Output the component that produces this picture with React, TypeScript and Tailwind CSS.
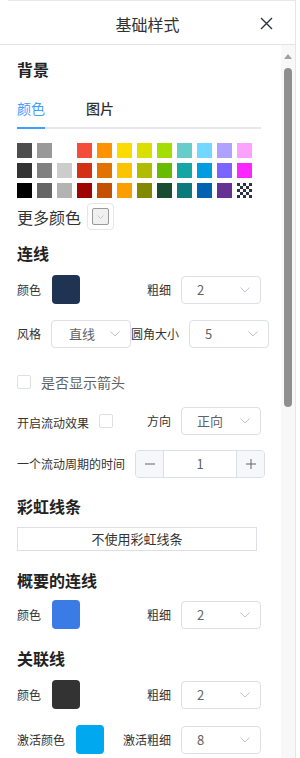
import React from 'react'

const FONT = '"Noto Sans CJK SC", "Noto Sans", sans-serif'

const SWATCHES = [
  ['#4d4d4d', '#999999', '#ffffff', '#f44e3b', '#fe9200', '#fcdc00', '#dbdf00', '#a4dd00', '#68ccca', '#73d8ff', '#aea1ff', '#fda1ff'],
  ['#333333', '#808080', '#cccccc', '#d33115', '#e27300', '#fcc400', '#b0bc00', '#68bc00', '#16a5a5', '#009ce0', '#7b64ff', '#fa28ff'],
  ['#000000', '#666666', '#b3b3b3', '#9f0500', '#c45100', '#fb9e00', '#808900', '#194d33', '#0c797d', '#0062b1', '#653294', 'transparent'],
]

function Chevron({ className = '' }: { className?: string }) {
  return (
    <svg width="10" height="6" viewBox="0 0 10 6" className={className}>
      <path d="M0.5 0.5 L5 5 L9.5 0.5" fill="none" stroke="#c0c4cc" strokeWidth="1" />
    </svg>
  )
}

function Select({ value }: { value: string }) {
  return (
    <div className="w-[80px] h-[28px] border border-[#dcdfe6] rounded-[4px] flex items-center pl-[15px] pr-[10px] text-[13px] text-[#606266] bg-white shrink-0">
      <span className="flex-1">{value}</span>
      <Chevron />
    </div>
  )
}

function Heading({ children, className = '' }: { children: React.ReactNode; className?: string }) {
  return <div className={`h-[24px] leading-[24px] text-[16px] font-bold text-[#222] ${className}`}>{children}</div>
}

function Checker() {
  return (
    <div className="w-[15px] h-[15px] grid grid-cols-5 grid-rows-5">
      {Array.from({ length: 25 }).map((_, i) => (
        <div key={i} className={(Math.floor(i / 5) + (i % 5)) % 2 === 0 ? 'bg-[#2b3345]' : 'bg-white'} />
      ))}
    </div>
  )
}

function ColorRow({ color, label = '颜色', rightLabel = '粗细', value = '2', className = '' }: {
  color: string; label?: string; rightLabel?: string; value?: string; className?: string
}) {
  return (
    <div className={`flex items-center h-[29px] ${className}`}>
      <span className="text-[12px] text-[#333]">{label}</span>
      <div className="ml-[11px] w-[28px] h-[29px] rounded-[4px]" style={{ background: color }} />
      <div className="flex-1" />
      <span className="text-[12px] text-[#333]">{rightLabel}</span>
      <div className="ml-[10px]"><Select value={value} /></div>
    </div>
  )
}

export default function App() {
  return (
    <div className="w-[300px] h-[758px] bg-white overflow-hidden" style={{ fontFamily: FONT }}>
      <div className="w-[296px] h-full flex flex-col border-r border-[#e6e6e6]">
        <div className="h-[1px] ml-[8px] bg-[#e8e8e8] shrink-0" />
        {/* header */}
        <div className="h-[44px] shrink-0 border-b border-[#e4e4e4] flex items-center justify-center relative">
          <span className="text-[16px] text-[#303133] mt-[2px]">基础样式</span>
          <svg width="13" height="13" viewBox="0 0 13 13" className="absolute left-[260px] top-[16px]">
            <path d="M1 1 L12 12 M12 1 L1 12" stroke="#2c3440" strokeWidth="1.4" />
          </svg>
        </div>

        <div className="flex-1 flex overflow-hidden">
          {/* content */}
          <div className="w-[281px] pl-[17px] pr-[20px] overflow-hidden">
            <Heading className="mt-[12px]">背景</Heading>

            {/* tabs */}
            <div className="mt-[8px] h-[40px] flex items-center relative border-b-2 border-[#e4e7ed]">
              <span className="text-[14px] text-[#409eff] pr-[20px]">颜色</span>
              <span className="text-[14px] text-[#303133] font-medium pl-[21px]">图片</span>
              <div className="absolute left-0 bottom-[-2px] w-[28px] h-[2px] bg-[#409eff]" />
            </div>

            {/* swatches */}
            <div className="mt-[14px] flex flex-col gap-[5px]">
              {SWATCHES.map((row, r) => (
                <div key={r} className="flex gap-[5px]">
                  {row.map((c, i) =>
                    c === 'transparent' ? (
                      <Checker key={i} />
                    ) : (
                      <div key={i} className="w-[15px] h-[15px]" style={{ background: c }} />
                    )
                  )}
                </div>
              ))}
            </div>

            <div className="mt-[5px] h-[27px] flex items-center">
              <span className="text-[16px] text-[#333]">更多颜色</span>
              <div className="ml-[6px] w-[27px] h-[27px] border border-[#e6e6e6] rounded-[4px] p-[4px]">
                <div className="w-full h-full border border-[#999] rounded-[2px] bg-[#f0f0f0] flex items-center justify-center">
                  <svg width="7" height="4" viewBox="0 0 7 4">
                    <path d="M0.5 0.5 L3.5 3.5 L6.5 0.5" fill="none" stroke="#c8c8c8" strokeWidth="1" />
                  </svg>
                </div>
              </div>
            </div>

            <Heading className="mt-[11px]">连线</Heading>
            <ColorRow color="#1f3352" className="mt-[10px]" />

            <div className="mt-[16px] h-[28px] flex items-center whitespace-nowrap">
              <span className="text-[12px] text-[#333]">风格</span>
              <div className="ml-[10px] w-[80px] h-[28px] border border-[#dcdfe6] rounded-[4px] flex items-center pl-[17px] pr-[10px] text-[13px] text-[#606266] shrink-0">
                <span className="flex-1">直线</span>
                <Chevron />
              </div>
              <span className="text-[12px] text-[#333]">圆角大小</span>
              <div className="ml-[10px]"><Select value="5" /></div>
            </div>

            <div className="mt-[24px] h-[20px] flex items-center">
              <div className="w-[14px] h-[14px] border border-[#dcdfe6] rounded-[2px] bg-white" />
              <span className="ml-[10px] text-[14px] text-[#606266]">是否显示箭头</span>
            </div>

            <div className="mt-[15px] h-[28px] flex items-center">
              <span className="text-[12px] text-[#333] mt-[3px]">开启流动效果</span>
              <div className="ml-[10px] w-[14px] h-[14px] border border-[#dcdfe6] rounded-[2px] bg-white" />
              <div className="flex-1" />
              <span className="text-[12px] text-[#333]">方向</span>
              <div className="ml-[10px]"><Select value="正向" /></div>
            </div>

            <div className="mt-[15px] h-[28px] flex items-center whitespace-nowrap">
              <span className="text-[12px] text-[#333]">一个流动周期的时间</span>
              <div className="ml-[10px] w-[130px] h-[28px] border border-[#dcdfe6] rounded-[4px] flex shrink-0 overflow-hidden">
                <div className="w-[28px] bg-[#f5f7fa] border-r border-[#dcdfe6] flex items-center justify-center text-[#606266] text-[16px]">
                  <svg width="10" height="2" viewBox="0 0 10 2"><path d="M0 1 H10" stroke="#606266" strokeWidth="1" /></svg>
                </div>
                <div className="flex-1 flex items-center justify-center text-[13px] text-[#606266]">1</div>
                <div className="w-[28px] bg-[#f5f7fa] border-l border-[#dcdfe6] flex items-center justify-center">
                  <svg width="10" height="10" viewBox="0 0 10 10"><path d="M0 5 H10 M5 0 V10" stroke="#606266" strokeWidth="1" /></svg>
                </div>
              </div>
            </div>

            <Heading className="mt-[16px]">彩虹线条</Heading>
            <div className="mt-[9px] w-[240px] h-[24px] border border-[#dcdfe6] flex items-center justify-center text-[13px] text-[#333]">
              不使用彩虹线条
            </div>

            <Heading className="mt-[17px]">概要的连线</Heading>
            <ColorRow color="#3a7be6" className="mt-[8px]" />

            <Heading className="mt-[17px]">关联线</Heading>
            <ColorRow color="#333333" className="mt-[10px]" />
            <ColorRow color="#00a8f0" label="激活颜色" rightLabel="激活粗细" value="8" className="mt-[16px]" />
          </div>

          {/* scrollbar */}
          <div className="w-[14px] bg-[#f8f8f8] flex flex-col items-center">
            <div className="mt-[9px] w-0 h-0 border-l-[4px] border-r-[4px] border-b-[5px] border-l-transparent border-r-transparent border-b-[#a0a0a0]" />
            <div className="mt-[9px] w-[8px] h-[339px] rounded-full bg-[#8f8f8f]" />
          </div>
        </div>
      </div>
    </div>
  )
}
